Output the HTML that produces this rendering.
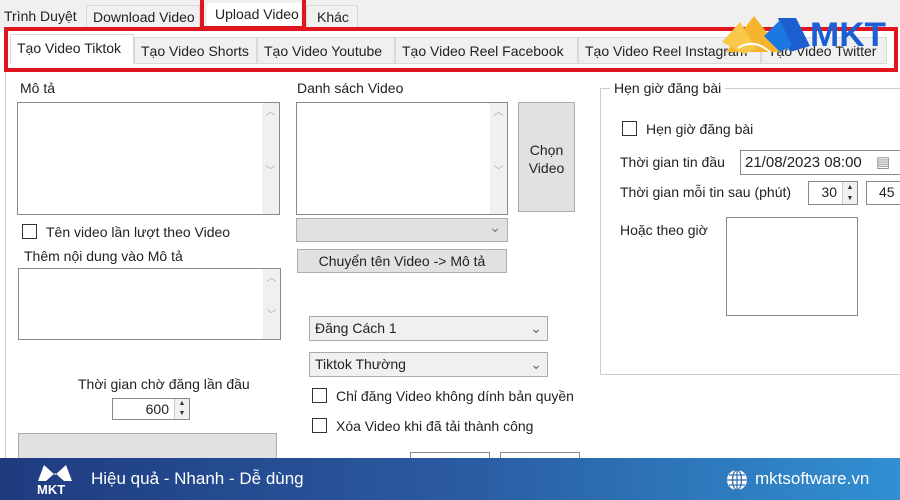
<!DOCTYPE html>
<html><head><meta charset="utf-8"><style>
*{box-sizing:border-box;margin:0;padding:0}
body{width:900px;height:500px;overflow:hidden;background:#fff;font-family:"Liberation Sans",sans-serif;font-size:14px;color:#222;position:relative}
.a{position:absolute}
.box{position:absolute;background:#fff;border:1px solid #8a8a8a}
.btn{position:absolute;background:#e1e1e1;border:1px solid #adadad;text-align:center}
.cb{position:absolute;width:15px;height:15px;border:1px solid #333;background:#fff}
.sb{position:absolute;right:0;top:0;bottom:0;width:17px;background:#f0f0f0;color:#aaa;font-size:10px;text-align:center}
.tab{position:absolute;top:37px;height:27px;background:#f0f0f0;border:1px solid #d9d9d9;font-size:14px;line-height:26px;padding-left:6px}
.red{position:absolute;border:4px solid #e0161e}
.sp{position:absolute;right:0;top:0;bottom:0;width:15px;background:#f0f0f0;border-left:1px solid #ccc;font-size:7px;line-height:10px;text-align:center;color:#333}
</style></head><body>
<div class="a" style="left:0;top:0;width:900px;height:30px;background:#f0f0f0"></div>
<div class="a" style="left:0;top:28px;width:900px;height:44px;background:#fff"></div>
<div class="a" style="left:4px;top:8px;font-size:14px">Trình Duyệt</div>
<div class="a" style="left:86px;top:5px;width:114px;height:24px;border:1px solid #d9d9d9;background:#f0f0f0;padding:3px 0 0 6px">Download Video</div>
<div class="a" style="left:207px;top:3px;width:94px;height:26px;background:#fff;padding:3px 0 0 8px">Upload Video</div>
<div class="a" style="left:306px;top:5px;width:52px;height:24px;border:1px solid #d9d9d9;background:#f0f0f0;padding:3px 0 0 10px">Khác</div>
<div class="red" style="left:200px;top:-4px;width:106px;height:34px"></div>
<div class="red" style="left:4px;top:27px;width:894px;height:45px"></div>
<div class="tab" style="left:10px;top:34px;width:124px;height:30px;background:#fff;border-bottom:none">Tạo Video Tiktok</div>
<div class="tab" style="left:134px;width:123px">Tạo Video Shorts</div>
<div class="tab" style="left:257px;width:138px">Tạo Video Youtube</div>
<div class="tab" style="left:395px;width:183px">Tạo Video Reel Facebook</div>
<div class="tab" style="left:578px;width:183px">Tạo Video Reel Instagram</div>
<div class="tab" style="left:761px;width:126px">Tạo Video Twitter</div>
<svg class="a" style="left:718px;top:12px" width="170" height="48" viewBox="0 0 170 48">
<polygon points="36,4 64,40 8,40" fill="#f5b52f"/>
<polygon points="4,30 22,10 38,36 26,42" fill="#f9c84a"/>
<path d="M20,36 Q36,26 52,40" stroke="#fff" stroke-width="2" fill="none"/>
<polygon points="60,6 78,6 92,34 72,40" fill="#1d5fd0"/>
<polygon points="46,24 62,8 74,34 62,40" fill="#1a78e0"/>
<text x="92" y="34" font-family="Liberation Sans" font-weight="bold" font-size="34" fill="#1a5fd5" textLength="76" lengthAdjust="spacingAndGlyphs">MKT</text>
</svg>
<div class="a" style="left:5px;top:72px;width:1px;height:386px;background:#ccc"></div>
<div class="a" style="left:20px;top:80px">Mô tả</div>
<div class="box" style="left:17px;top:102px;width:263px;height:113px"><div class="sb">︿<br><br><br><br><br>﹀</div></div>
<div class="cb" style="left:22px;top:224px"></div>
<div class="a" style="left:46px;top:224px">Tên video lần lượt theo Video</div>
<div class="a" style="left:24px;top:248px">Thêm nội dung vào Mô tả</div>
<div class="box" style="left:18px;top:268px;width:263px;height:72px"><div class="sb">︿<br><br><br>﹀</div></div>
<div class="a" style="left:78px;top:376px">Thời gian chờ đăng lần đầu</div>
<div class="box" style="left:112px;top:398px;width:78px;height:22px;text-align:right;padding:2px 20px 0 0">600<div class="sp">▲<br>▼</div></div>
<div class="btn" style="left:18px;top:433px;width:259px;height:30px"></div>
<div class="a" style="left:297px;top:80px">Danh sách Video</div>
<div class="box" style="left:296px;top:102px;width:212px;height:113px"><div class="sb">︿<br><br><br><br><br>﹀</div></div>
<div class="btn" style="left:518px;top:102px;width:57px;height:110px;padding-top:38px;line-height:18px">Chọn<br>Video</div>
<div class="btn" style="left:296px;top:218px;width:212px;height:24px;text-align:right;padding-right:6px;color:#777">⌄</div>
<div class="btn" style="left:297px;top:249px;width:210px;height:24px;line-height:22px">Chuyển tên Video -&gt; Mô tả</div>
<div class="box" style="left:309px;top:316px;width:239px;height:25px;background:#f0f0f0;border-color:#aaa;padding:3px 5px">Đăng Cách 1<span style="float:right;color:#666">⌄</span></div>
<div class="box" style="left:309px;top:352px;width:239px;height:25px;background:#f0f0f0;border-color:#aaa;padding:3px 5px">Tiktok Thường<span style="float:right;color:#666">⌄</span></div>
<div class="cb" style="left:312px;top:388px"></div>
<div class="a" style="left:336px;top:388px">Chỉ đăng Video không dính bản quyền</div>
<div class="cb" style="left:312px;top:418px"></div>
<div class="a" style="left:336px;top:418px">Xóa Video khi đã tải thành công</div>
<div class="box" style="left:410px;top:452px;width:80px;height:20px"></div>
<div class="box" style="left:500px;top:452px;width:80px;height:20px"></div>
<div class="a" style="left:600px;top:88px;width:310px;height:287px;border:1px solid #ccc"></div>
<div class="a" style="left:610px;top:80px;background:#fff;padding:0 4px">Hẹn giờ đăng bài</div>
<div class="cb" style="left:622px;top:121px"></div>
<div class="a" style="left:646px;top:121px">Hẹn giờ đăng bài</div>
<div class="a" style="left:620px;top:154px">Thời gian tin đầu</div>
<div class="box" style="left:740px;top:150px;width:170px;height:25px;padding:2px 4px;font-size:15px">21/08/2023 08:00 <span style="color:#888;margin-left:10px">▤</span></div>
<div class="a" style="left:620px;top:184px">Thời gian mỗi tin sau (phút)</div>
<div class="box" style="left:808px;top:181px;width:50px;height:24px;text-align:right;padding:2px 20px 0 0">30<div class="sp" style="line-height:11px">▲<br>▼</div></div>
<div class="box" style="left:866px;top:181px;width:40px;height:24px;padding:2px 0 0 12px">45</div>
<div class="a" style="left:620px;top:222px">Hoặc theo giờ</div>
<div class="box" style="left:726px;top:217px;width:132px;height:99px"></div>
<div class="a" style="left:0;top:458px;width:900px;height:42px;background:linear-gradient(90deg,#1f3b80,#2a5aa0 50%,#3190d2)"></div>
<svg class="a" style="left:34px;top:461px" width="42" height="36" viewBox="0 0 42 36"><path d="M4,20 L10,4 L21,14 L32,4 L38,20 L30,20 L21,12 L12,20Z" fill="#fff"/><text x="3" y="33" font-family="Liberation Sans" font-weight="bold" font-size="13" fill="#fff">MKT</text></svg>
<div class="a" style="left:91px;top:469px;color:#fff;font-size:17px">Hiệu quả - Nhanh - Dễ dùng</div>
<svg class="a" style="left:726px;top:469px" width="22" height="22" viewBox="0 0 22 22"><circle cx="11" cy="11" r="10" fill="#fff"/><g stroke="#2d6cb0" stroke-width="1.2" fill="none"><ellipse cx="11" cy="11" rx="4.5" ry="10"/><line x1="11" y1="1" x2="11" y2="21"/><line x1="1" y1="11" x2="21" y2="11"/><line x1="3" y1="6" x2="19" y2="6"/><line x1="3" y1="16" x2="19" y2="16"/></g></svg>
<div class="a" style="left:755px;top:469px;color:#fff;font-size:17px">mktsoftware.vn</div>
</body></html>
